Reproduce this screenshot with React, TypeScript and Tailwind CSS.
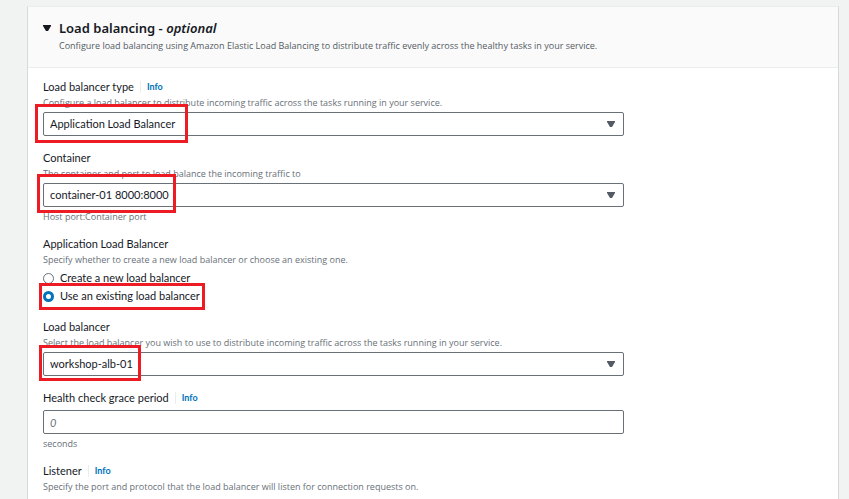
import type { ReactNode } from 'react';

function Caret({ className }: { className: string }) {
  return (
    <svg viewBox="0 0 8 6" className={className} aria-hidden="true">
      <path d="M0 0h8v1L5 6H3L0 1z" fill="currentColor" />
    </svg>
  );
}

function Highlight({ className }: { className: string }) {
  return <span aria-hidden="true" className={`pointer-events-none absolute border-3 border-[#ed1c24] ${className}`} />;
}

function InfoLink() {
  return (
    <a href="#info" className="ml-1.5 border-l border-[#eaeded] pl-1.5 text-[9px] leading-3 font-bold text-[#0073bb]">
      Info
    </a>
  );
}

function Label({ htmlFor, info, children }: { htmlFor?: string; info?: boolean; children: ReactNode }) {
  return (
    <div className="flex h-4 items-center text-[11px] leading-4">
      {htmlFor ? <label htmlFor={htmlFor}>{children}</label> : <span>{children}</span>}
      {info && <InfoLink />}
    </div>
  );
}

function Description({ children }: { children: ReactNode }) {
  return <p className="font-['Open_Sans','Noto_Sans',sans-serif] text-[9px] leading-4 pb-px text-[#687078]">{children}</p>;
}

function Hint({ children }: { children: ReactNode }) {
  return <p className="font-['Open_Sans','Noto_Sans',sans-serif] pt-0.5 text-[9px] leading-[15px] text-[#687078]">{children}</p>;
}

function SelectBox({ id, value, highlight }: { id: string; value: string; highlight: string }) {
  return (
    <div className="relative max-w-[581px]">
      <select
        id={id}
        className="block h-6 w-full appearance-none rounded-xs border border-[#687078] bg-white px-1.5 text-[11px] leading-4 text-[#16191f]"
      >
        <option>{value}</option>
      </select>
      <Caret className="pointer-events-none absolute top-[9px] right-[9px] h-1.5 w-2 text-[#545b64]" />
      <Highlight className={highlight} />
    </div>
  );
}

function RadioOption({ label, checked, children }: { label: string; checked?: boolean; children?: ReactNode }) {
  return (
    <div className="relative h-[18px] w-fit">
      <label className="flex h-full items-center gap-1.5 text-[11px] leading-4">
        <input
          type="radio"
          name="alb"
          defaultChecked={checked}
          className="size-[11px] appearance-none rounded-full border border-[#687078] bg-white checked:border-3 checked:border-[#0073bb]"
        />
        {label}
      </label>
      {children}
    </div>
  );
}

export default function App() {
  return (
    <div className="h-screen overflow-hidden bg-[#f1f3f3] pt-1.5 pr-2.5 pl-[27px] font-['Lato','Open_Sans',sans-serif] text-[#16191f]">
      <section className="min-h-full border border-[#d5dbdb] border-t-[#eaeded] bg-white">
        <header className="border-b border-[#eaeded] bg-[#fafafa] px-[15px] pt-[11px] pb-[13px]">
          <button
            type="button"
            className="flex items-center gap-2 font-['Noto_Sans','Open_Sans',sans-serif] text-[13px] leading-5 font-semibold"
          >
            <Caret className="h-1.5 w-2" />
            <span>
              Load balancing - <i>optional</i>
            </span>
          </button>
          <p className="pl-4 font-['Open_Sans','Noto_Sans',sans-serif] text-[9px] leading-4 text-[#545b64]">
            Configure load balancing using Amazon Elastic Load Balancing to distribute traffic evenly across the healthy
            tasks in your service.
          </p>
        </header>

        <form className="flex flex-col gap-3 px-[15px] pt-[11px] pb-5">
          <div className="pb-0.5">
            <Label htmlFor="type" info>
              Load balancer type
            </Label>
            <Description>
              Configure a load balancer to distribute incoming traffic across the tasks running in your service.
            </Description>
            <SelectBox id="type" value="Application Load Balancer" highlight="-top-2 -left-2 h-[39px] w-[153px]" />
          </div>

          <div>
            <Label htmlFor="container">Container</Label>
            <Description>The container and port to load balance the incoming traffic to</Description>
            <SelectBox id="container" value="container-01 8000:8000" highlight="-top-[9px] -left-1.5 h-[39px] w-[139px]" />
            <Hint>Host port:Container port</Hint>
          </div>

          <div role="radiogroup" aria-label="Application Load Balancer" className="pb-0.5">
            <Label>Application Load Balancer</Label>
            <Description>Specify whether to create a new load balancer or choose an existing one.</Description>
            <RadioOption label="Create a new load balancer" />
            <RadioOption label="Use an existing load balancer" checked>
              <Highlight className="-top-1 -left-1 h-[27px] w-[166px]" />
            </RadioOption>
          </div>

          <div className="pb-0.5">
            <Label htmlFor="balancer">Load balancer</Label>
            <Description>
              Select the load balancer you wish to use to distribute incoming traffic across the tasks running in your
              service.
            </Description>
            <SelectBox id="balancer" value="workshop-alb-01" highlight="-top-[7px] -left-1 h-9 w-[102px]" />
          </div>

          <div>
            <Label htmlFor="grace" info>
              Health check grace period
            </Label>
            <input
              id="grace"
              type="text"
              placeholder="0"
              className="mt-1 block h-6 w-full max-w-[581px] rounded-xs border border-[#687078] bg-white px-1.5 text-[11px] leading-4 placeholder:text-[#687078] placeholder:italic"
            />
            <Hint>seconds</Hint>
          </div>

          <div>
            <Label info>Listener</Label>
            <Description>
              Specify the port and protocol that the load balancer will listen for connection requests on.
            </Description>
          </div>
        </form>
      </section>
    </div>
  );
}
